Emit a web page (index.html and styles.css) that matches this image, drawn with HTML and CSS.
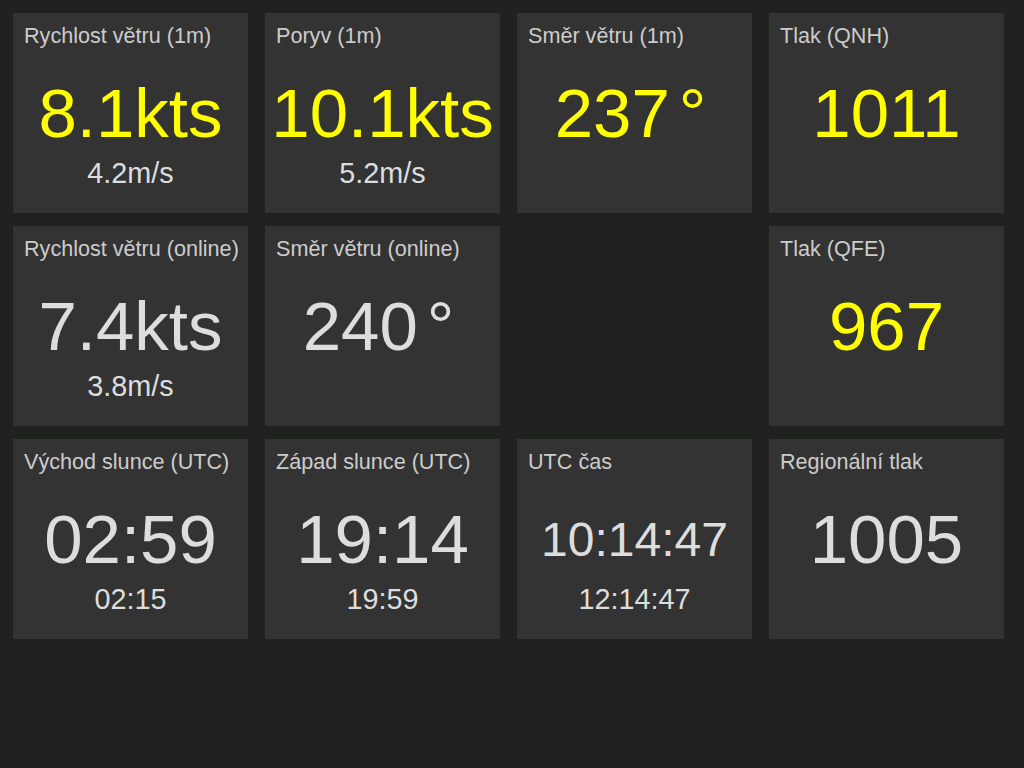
FILE: index.html
```html
<!DOCTYPE html>
<html lang="cs">
<head>
  <meta charset="UTF-8">
  <meta name="viewport" content="width=device-width, initial-scale=1.0">
  <title>Meteo</title>
  <link rel="stylesheet" href="styles.css">
</head>
<body>
  <div class="board">
    <div class="tile">
      <div class="title">Rychlost větru (1m)</div>
      <div class="value hot">8.1kts</div>
      <div class="sub">4.2m/s</div>
    </div>
    <div class="tile">
      <div class="title">Poryv (1m)</div>
      <div class="value hot">10.1kts</div>
      <div class="sub">5.2m/s</div>
    </div>
    <div class="tile">
      <div class="title">Směr větru (1m)</div>
      <div class="value hot">237<span class="deg">°</span></div>
    </div>
    <div class="tile">
      <div class="title">Tlak (QNH)</div>
      <div class="value hot">1011</div>
    </div>

    <div class="tile">
      <div class="title">Rychlost větru (online)</div>
      <div class="value">7.4kts</div>
      <div class="sub">3.8m/s</div>
    </div>
    <div class="tile">
      <div class="title">Směr větru (online)</div>
      <div class="value">240<span class="deg">°</span></div>
    </div>
    <div class="tile empty"></div>
    <div class="tile">
      <div class="title">Tlak (QFE)</div>
      <div class="value hot">967</div>
    </div>

    <div class="tile">
      <div class="title">Východ slunce (UTC)</div>
      <div class="value">02:59</div>
      <div class="sub">02:15</div>
    </div>
    <div class="tile">
      <div class="title">Západ slunce (UTC)</div>
      <div class="value">19:14</div>
      <div class="sub">19:59</div>
    </div>
    <div class="tile">
      <div class="title">UTC čas</div>
      <div class="value small">10:14:47</div>
      <div class="sub">12:14:47</div>
    </div>
    <div class="tile">
      <div class="title">Regionální tlak</div>
      <div class="value">1005</div>
    </div>
  </div>
</body>
</html>
```

FILE: styles.css
```css
body {
  margin: 0;
  background-color: #1f221f;
  font-family: "Liberation Sans", Arial, sans-serif;
  color: #dddddd;
  height: 100vh;
}
.board {
  display: grid;
  grid-template-columns: repeat(4, 235px);
  grid-auto-rows: 200px;
  gap: 13px 17px;
  padding: 13px;
}
.tile {
  background-color: #333333;
  display: flex;
  flex-direction: column;
  padding-top: 11px;
  box-sizing: border-box;
}
.tile.empty {
  background-color: transparent;
}
.title {
  font-size: 21.6px;
  line-height: 24px;
  color: #cccccc;
  padding-left: 11px;
  white-space: nowrap;
}
.value {
  margin-top: 23px;
  height: 86px;
  line-height: 86px;
  font-size: 69px;
  text-align: center;
  color: #dddddd;
  white-space: nowrap;
}
.value.small {
  font-size: 48px;
}
.value.hot {
  color: #ffff00;
}
.deg {
  margin: 0 8px 0 9px;
}
.sub {
  font-size: 28.8px;
  text-align: center;
  color: #dddddd;
}
```
